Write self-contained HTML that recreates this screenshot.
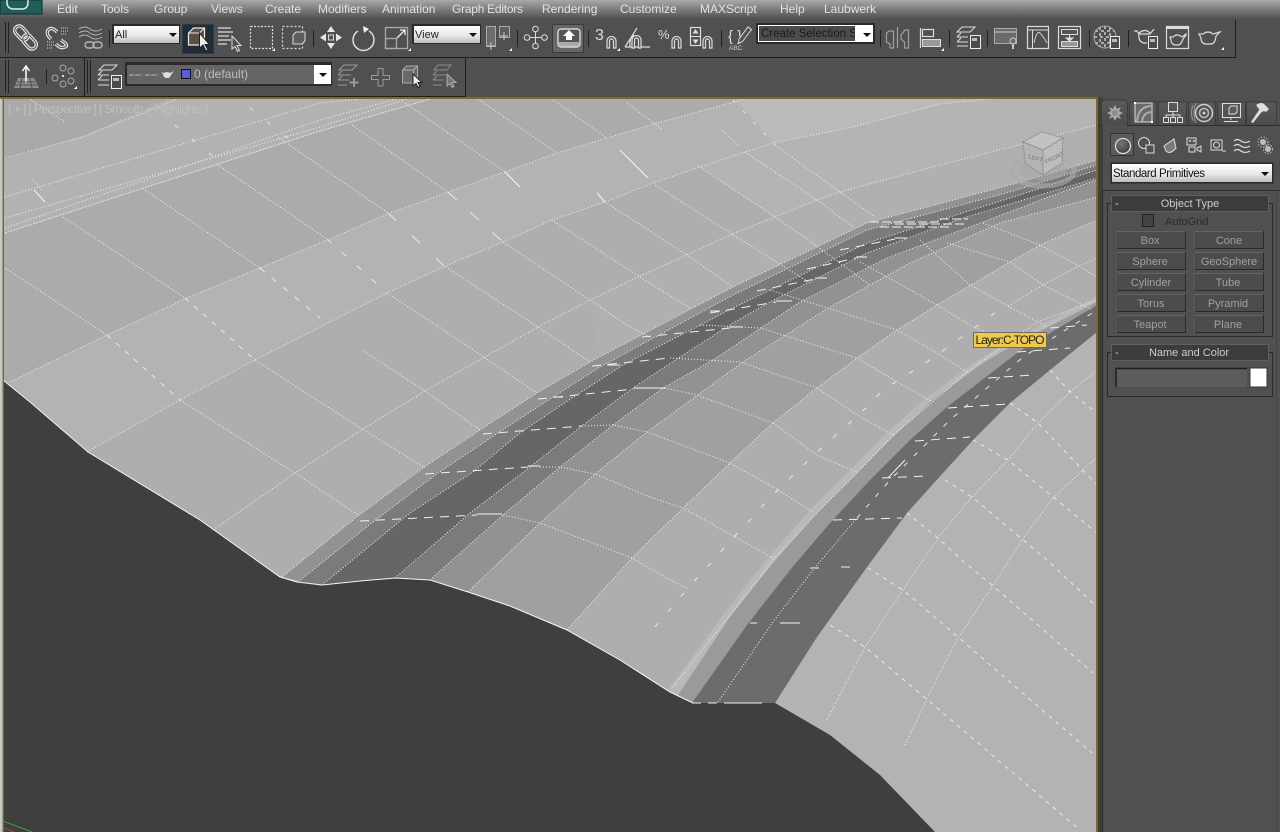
<!DOCTYPE html>
<html lang="en"><head><meta charset="utf-8"><title>3ds Max</title>
<style>
html,body{margin:0;padding:0;background:#505050;width:1280px;height:832px;overflow:hidden}
svg{display:block;font-family:"Liberation Sans",sans-serif}
.d{fill:none;stroke:#f2f2f2;stroke-width:1;stroke-dasharray:1 2}
.s{fill:none;stroke:#eaeaea;stroke-width:1;stroke-dasharray:4 5}
.p{fill:none;stroke:#eaeaea;stroke-width:1;stroke-dasharray:5 15}
.c{fill:none;stroke:#f0f0f0;stroke-width:1;stroke-dasharray:9 7}
.w{fill:none;stroke:#f5f5f5;stroke-width:1}
.i{fill:none;stroke:#dcdcdc;stroke-width:1.200}
.g{fill:none;stroke:#a0a0a0;stroke-width:1.200}
.m{font-size:12px;fill:#e2e2e2}
.b{font-size:11px;fill:#a0a0a0;text-anchor:middle}
.h{font-size:11px;fill:#cccccc;text-anchor:middle}
</style></head><body>
<svg width="1280" height="832" viewBox="0 0 1280 832" xmlns="http://www.w3.org/2000/svg">
<defs>
<linearGradient id="mb" x1="0" y1="0" x2="0" y2="1"><stop offset="0" stop-color="#a8a8a8"/><stop offset=".5" stop-color="#7c7c7c"/><stop offset="1" stop-color="#505050"/></linearGradient>
<linearGradient id="dd" x1="0" y1="0" x2="0" y2="1"><stop offset="0" stop-color="#fff"/><stop offset=".6" stop-color="#e4e4e4"/><stop offset="1" stop-color="#bdbdbd"/></linearGradient>
<linearGradient id="tab" x1="0" y1="0" x2="0" y2="1"><stop offset="0" stop-color="#5a5a5a"/><stop offset="1" stop-color="#4c4c4c"/></linearGradient>
<radialGradient id="sph" cx=".4" cy=".35" r=".7"><stop offset="0" stop-color="#777"/><stop offset="1" stop-color="#3c3c3c"/></radialGradient>
</defs>

<rect width="1280" height="832" fill="#505050"/>

<!-- VIEWPORT -->
<svg x="0" y="0" width="1097" height="832">
<rect x="3" y="98" width="1094" height="734" fill="#aeaeae"/>
<polygon points="3,98 430,98 320,131 3,233" fill="#b2b2b2"/>
<polygon points="3,98 170,98 85,135 3,160" fill="#a9a9a9"/>
<polygon points="3,233 320,131 430,98 745,98 657,123 607,138 557,153 505,172 448,192 390,213 320,243 260,268 187,298 107,335 10,382 3,382" fill="#ababab"/>
<polygon points="187,298 260,268 320,243 390,213 448,192 505,172 557,153 607,138 657,123 745,99 773,143 700,167 653,183 605,202 552,220 503,242 443,267 387,293 320,327 255,360 180,400 87,452 10,382 107,335" fill="#b3b3b3"/>
<polygon points="735,98 1000,98 940,104 853,127 773,143" fill="#bababa"/>
<polygon points="773,143 853,127 940,104 1000,98 1097,98 1097,125 940,165 840,192 775,217 700,167" fill="#b4b4b4"/>
<polygon points="590,300 627,282 680,258 732,234 775,217 840,192 940,165 1097,125 1097,160 1010,185 867,223 733,287 600,357" fill="#b0b0b0"/>
<polygon points="567,630 632,558 650,540 730,463 773,423 817,388 857,358 897,330 937,305 1010,262 1040,245 1097,220 1097,832 900,832 775,703 693,703" fill="#aeaeae"/>
<polygon points="775,703 817,637 867,567 907,513 943,473 973,440 1010,403 1050,370 1097,332 1097,832 935,832" fill="#b3b3b3"/>

<!-- road 1 -->
<polygon points="282,577 358,516 423,468 480,430 537,393 590,362 733,287 867,223 1010,185 1097,160 1097,220 1040,245 1010,262 937,305 897,330 857,358 817,388 773,423 730,463 650,540 632,558 567,630 468,592" fill="#a0a0a0"/>
<polygon points="282,577 358,516 423,468 480,430 537,393 590,362 733,287 867,223 1010,185 1097,160 1097,197 1000,223 910,263 830,307 743,362 647,432 595,474 540,523 468,592 430,580 320,585" fill="#929292"/>
<polygon points="298,582 373,522 438,473 498,433 553,397 600,367 733,295 867,230 1010,192 1097,165 1097,180 1067,190 983,222 887,258 800,302 713,360 663,388 613,425 560,467 503,515 430,580 395,578 322,585" fill="#7b7b7b"/>
<polygon points="322,585 410,513 473,472 520,433 572,398 623,365 733,308 867,243 1010,198 1097,170 1097,178 1033,197 960,219 867,253 770,302 733,323 680,357 633,388 583,425 530,467 470,513 395,578" fill="#666666"/>

<!-- road 2 -->
<polygon points="668,690 725,612 768,558 812,508 852,468 888,432 928,396 978,360 1012,340 1097,296 1097,302 1017,343 983,363 933,400 893,437 857,473 817,513 773,563 730,617 678,695" fill="#b9b9b9"/>
<polygon points="678,695 730,617 773,563 817,513 857,473 893,437 933,400 983,363 1017,343 1097,302 1097,308 1017,353 947,407 910,440 870,480 830,523 790,570 747,625 692,703" fill="#9a9a9a"/>
<polygon points="692,703 747,625 790,570 830,523 870,480 910,440 947,407 1017,353 1097,305 1097,332 1050,370 1010,403 973,440 943,473 907,513 867,567 817,637 775,703" fill="#6c6c6c"/>

<!-- dark ground -->
<polygon points="3,380 30,402 88,452 200,520 280,577 297,582 322,585 360,581 395,578 430,580 468,592 510,606 567,630 620,660 670,692 693,703 775,703 830,735 880,775 935,832 3,832" fill="#3f3f3f"/>
<polyline class="w" points="3,380 30,402 88,452 200,520 280,577 297,582 322,585 360,581 395,578 430,580 468,592 510,606 567,630 620,660 670,692 693,703"/>

<!-- grid: up-right family -->
<polyline class="d" points="5,197 320,103 370,98"/>
<polyline class="d" points="5,218 320,127 410,98"/>
<polyline points="5,233 320,131 430,99" style="fill:none;stroke:#e4e4e4;stroke-dasharray:2 1"/>
<polyline class="d" points="5,228 320,120 400,98"/>
<polyline class="d" points="5,158 83,137 180,98"/>
<polyline class="d" points="10,382 107,335 187,298 260,268 320,243 390,213 448,192 505,172 557,153 607,138 657,123 745,99"/>
<polyline class="d" points="87,452 180,400 255,360 320,327 387,293 443,267 503,242 552,220 605,202 653,183 700,167 745,152 773,143 853,127 940,104 1000,98"/>
<polyline class="d" points="213,530 295,473 363,429 425,391 483,358 538,327 590,300 627,282 680,258 732,234 775,217 817,200 840,192 940,165 1097,125"/>
<!-- grid: down-right family -->
<polyline class="d" points="5,268 107,335"/><polyline class="s" style="stroke-dasharray:5 7" points="107,335 180,400"/><polyline class="d" points="180,400 295,473 358,515"/>
<polyline class="d" points="63,217 185,298"/><polyline class="s" style="stroke-dasharray:5 7" points="185,298 255,360"/><polyline class="d" points="255,360 362,429 425,468"/>
<polyline class="d" points="145,190 260,268"/><polyline class="s" style="stroke-dasharray:6 9" points="260,268 320,318"/><polyline class="d" points="362,350 425,391 480,430"/>
<polyline class="d" points="218,165 327,239"/><polyline class="s" style="stroke-dasharray:6 14" points="327,239 387,293"/><polyline class="d" points="387,293 448,333 537,393"/>
<polyline class="d" points="278,137 388,213"/><polyline class="s" style="stroke-dasharray:11 22" points="388,213 443,265"/><polyline class="d" points="443,265 538,327 590,362"/>
<polyline class="d" points="352,125 448,192"/><polyline class="s" style="stroke-dasharray:12 18" points="448,192 503,242"/><polyline class="d" points="503,242 627,325 650,337"/>
<polyline class="d" points="405,103 505,172"/><polyline class="w" points="505,172 520,187"/><polyline class="d" points="552,220 640,277 690,308"/>
<polyline class="d" points="478,99 557,153"/><polyline class="w" points="597,193 605,202"/><polyline class="d" points="605,202 687,255 733,287"/>
<polyline class="d" points="553,100 607,138"/><polyline class="w" points="620,150 648,178"/><polyline class="d" points="655,185 732,234 810,283"/>
<polyline class="d" points="627,103 663,130"/><polyline class="d" points="698,166 775,217 800,234 870,285"/>
<polyline class="d" points="722,130 738,145"/><polyline class="d" points="745,152 817,200 853,227"/>
<polyline class="s" style="stroke-dasharray:3 12" points="733,100 775,145"/><polyline class="d" points="775,145 840,192 875,217"/>
<polyline class="d" points="28,98 65,122"/>
<polyline class="d" points="33,180 42,190"/><polyline class="w" points="34,190 45,202"/>
<polyline class="s" style="stroke-dasharray:4 18" points="175,125 215,158"/>
<polyline class="s" style="stroke-dasharray:4 18" points="250,108 290,140"/>
<!-- road 1 edges -->
<polyline class="d" points="282,577 358,516 423,468 480,430 537,393 590,362 733,287 867,223 1010,185 1097,160"/>
<polyline class="d" points="298,582 373,522 438,473 498,433 553,397 600,367 733,295 867,230 1010,192 1097,165"/>
<polyline class="d" points="322,585 410,513 473,472 520,433 572,398 623,365 733,308 867,243 1010,198 1097,170"/>
<polyline class="d" points="395,578 470,513 530,467 583,425 633,388 680,357 733,323 770,302 867,253 960,219 1033,197 1097,178"/>
<polyline class="d" points="430,580 503,515 560,467 613,425 663,388 713,360 800,302 887,258 983,222 1067,190 1097,180"/>
<polyline class="d" points="468,592 540,523 595,474 647,432 743,362 830,307 910,263 1000,223 1097,197"/>
<polyline class="d" points="567,630 632,558 650,540 730,463 773,423 817,388 857,358 897,330 937,305 1010,262 1040,245 1097,220"/>
<!-- road 1 crossings -->
<polyline class="c" points="360,521 477,515"/><path class="w" d="M477 514H502"/>
<polyline class="c" points="425,474 528,467"/><path class="w" d="M528 466H540"/>
<polyline class="c" points="483,434 582,426"/>
<polyline class="c" points="538,399 634,389"/><path class="w" d="M634 388H665M553 397H563"/>
<polyline class="c" points="592,366 670,358"/><path class="w" d="M607 365H620"/>
<polyline class="c" points="642,337 730,328"/><path class="w" d="M730 327H743"/>
<polyline class="c" points="710,313 776,302"/><path class="w" d="M710 311H720M776 301H792"/>
<polyline class="c" points="757,291 815,279"/><path class="w" d="M815 278H827"/>
<polyline class="c" points="807,269 856,258"/><path class="w" d="M856 257H867"/>
<polyline class="c" points="840,250 895,239"/><path class="w" d="M895 238H907"/>
<path d="M880 227H950M895 224H965M870 222H940M940 219H968" style="fill:none;stroke:#f0f0f0;stroke-dasharray:9 3"/>
<!-- continuation of crossings -->
<polyline class="d" points="503,515 540,523 632,558 670,580 687,588"/>
<polyline class="d" points="540,467 560,467 595,474 650,497 683,508 773,558"/>
<polyline class="d" points="582,426 613,425 647,432 730,463 778,490 813,512"/>
<polyline class="d" points="665,388 697,395 773,423 817,455 857,472"/>
<polyline class="d" points="670,358 740,362 817,388 857,415 893,435"/>
<polyline class="d" points="700,325 760,328 857,358 897,382 933,402"/>
<polyline class="d" points="770,290 897,330 937,353 967,372"/>
<polyline class="d" points="860,262 937,305 975,328 1017,343"/>
<polyline class="d" points="920,240 970,285 1008,306 1047,327"/>
<polyline class="d" points="947,243 1010,262 1043,285 1093,310"/>
<polyline class="d" points="983,223 1040,245 1077,265 1097,277"/>
<polyline class="d" points="1008,306 1043,285 1077,267 1097,258"/>
<!-- road 2 lines -->
<polyline class="d" points="673,687 730,615 773,560 817,513 857,473 893,435 933,402 967,372 1037,322 1097,300"/>
<polyline class="p" points="655,627 678,600 697,578 712,562 728,543 743,528 765,503 788,480 817,452 845,427 867,407 883,390 933,358 1003,307"/>
<polyline class="d" points="718,702 773,622 813,570 857,518"/>
<polyline class="s" style="stroke-dasharray:5 9" points="857,518 890,480 915,455 950,420 987,388 1023,357 1097,310"/>
<path class="c" d="M692 703H733"/><path class="w" d="M733 703H762"/>
<path class="c" style="stroke-dasharray:7 30" d="M750 623H780"/><path class="w" d="M780 623H800"/>
<path class="c" d="M810 568H825M841 567H853"/>
<polyline class="c" points="833,520 902,518"/>
<polyline class="c" points="882,478 927,476"/><path class="w" d="M888 478L905 460"/>
<polyline class="c" points="915,441 970,437"/>
<polyline class="c" points="948,408 1008,404"/>
<polyline class="c" points="988,378 1033,375"/>
<polyline class="c" points="1017,352 1070,348"/>
<polyline class="c" points="1050,328 1087,325"/>
<!-- right side dashed -->
<polyline class="s" points="907,513 938,538 965,563 992,585 1093,673"/>
<polyline class="s" points="868,568 903,590 930,613 958,637 1092,753"/>
<polyline class="s" points="830,625 865,647 930,702 1080,830"/>
<polyline class="s" points="945,480 972,497 1047,560 1095,605"/>
<polyline class="s" points="973,440 1008,460 1097,533"/>
<polyline class="s" points="1010,403 1038,423 1097,485"/>
<polyline class="s" points="1050,370 1070,392 1097,413"/>
<polyline class="d" points="827,720 865,647 903,590 938,538 972,497 1008,460 1038,423 1070,392 1097,370"/>
<polyline class="d" points="905,745 917,720 930,692 958,638 992,587 1022,540 1053,498 1097,457"/>

<!-- nav cube -->
<ellipse cx="1043" cy="171" rx="31" ry="15" fill="none" stroke="#a8acb0" stroke-width="5" opacity=".6"/>
<ellipse cx="1043" cy="170" rx="24" ry="10" fill="#a6a6a6" opacity=".5"/>
<polygon points="1023,142 1042,132 1063,138 1043,150" fill="#c2c2c2" stroke="#8a8a8a" stroke-dasharray="2 1"/>
<polygon points="1023,142 1043,150 1043,175 1025,163" fill="#b4b4b4" stroke="#8a8a8a" stroke-dasharray="2 1"/>
<polygon points="1043,150 1063,138 1062,163 1043,175" fill="#bdbdbd" stroke="#8a8a8a" stroke-dasharray="2 1"/>
<text x="1028" y="158" font-size="6" fill="#777" transform="rotate(18 1028 158)">LEFT</text>
<text x="1046" y="164" font-size="6" fill="#777" transform="rotate(-26 1046 164)">FRONT</text>

<path d="M0 820L32 832" stroke="#3aa04a" fill="none"/><path d="M0 826L14 832" stroke="#a04a3a" fill="none"/>

<text x="8" y="113" font-size="12" fill="#bfbfbf" textLength="200">[ + ] [ Perspective ] [ Smooth + Highlights ]</text>
</svg>
<!-- viewport frame -->
<rect x="0" y="97" width="1097" height="2" fill="#7a6a2e"/>
<rect x="2.500" y="97" width="1.500" height="735" fill="#7a6a2e"/>
<rect x="1096" y="97" width="2" height="735" fill="#7a6a2e"/>
<rect x="1098" y="97" width="5" height="735" fill="#3e3e3e"/>
<rect x="0" y="99" width="2.500" height="733" fill="#c8c8c8"/>

<!-- tooltip -->
<rect x="973.500" y="332.500" width="73" height="15" fill="#edc94c" stroke="#6c6c6c"/>
<text x="975.500" y="344" font-size="12" fill="#222" textLength="69">Layer:C-TOPO</text>

<!-- MENU -->
<rect width="1280" height="19" fill="url(#mb)"/>
<rect x="0" y="0" width="42" height="14" fill="#1f5f5a" stroke="#0f2f2e"/>
<path d="M7 0V2Q7 9 14 9H22Q28 9 28 2V0" fill="none" stroke="#e6e6e6" stroke-width="1.500"/>
<text class="m" x="57" y="13">Edit</text>
<text class="m" x="101" y="13">Tools</text>
<text class="m" x="154" y="13">Group</text>
<text class="m" x="211" y="13">Views</text>
<text class="m" x="265" y="13">Create</text>
<text class="m" x="318" y="13">Modifiers</text>
<text class="m" x="382" y="13">Animation</text>
<text class="m" x="452" y="13" textLength="71">Graph Editors</text>
<text class="m" x="542" y="13">Rendering</text>
<text class="m" x="620" y="13">Customize</text>
<text class="m" x="700" y="13">MAXScript</text>
<text class="m" x="780" y="13">Help</text>
<text class="m" x="824" y="13">Laubwerk</text>

<!-- toolbars frame -->
<path d="M0 57.500H1235.500V19.500" fill="none" stroke="#1e1e1e"/>
<path d="M0 96.500H465.500V58" fill="none" stroke="#1e1e1e"/>
<path d="M84.500 58V96" stroke="#1e1e1e" fill="none"/>
<!-- grips -->
<path d="M5.500 22V53M8.500 22V53M5.500 60V93M8.500 60V93M87.500 60V93M90.500 60V93" stroke="#222" fill="none"/>
<path d="M109.500 30V47M313.500 30V47M517.500 30V47M588.500 30V47M721.500 30V47M880.500 30V47M949.500 30V47M987.500 30V47M1089.500 30V47M1128.500 30V47M46.500 69V84" stroke="#222" fill="none"/>

<!-- link -->
<g transform="translate(25.500,37.500) rotate(48)" fill="none"><rect x="-14" y="-4.500" width="16" height="9" rx="4.500" stroke="#e4e4e4" stroke-width="3.400"/><rect x="-2" y="-4.500" width="16" height="9" rx="4.500" stroke="#e4e4e4" stroke-width="3.400"/><rect x="-14" y="-4.500" width="16" height="9" rx="4.500" stroke="#505050"/><rect x="-2" y="-4.500" width="16" height="9" rx="4.500" stroke="#505050"/></g>
<!-- unlink -->
<g fill="none"><path d="M57 32L55 30Q51 27 48 30Q46 33 49 37L51 39" stroke="#e4e4e4" stroke-width="3.400"/><path d="M57 32L55 30Q51 27 48 30Q46 33 49 37L51 39" stroke="#505050"/><path d="M61 40L65 43Q68 46 65 47Q61 49 57 45L56 44" stroke="#e4e4e4" stroke-width="3.400"/><path d="M61 40L65 43Q68 46 65 47Q61 49 57 45L56 44" stroke="#505050"/><path d="M61 28h7M61 31h7M61 34h6M47 42h7M47 45h7M47 48h6" stroke="#d8d8d8" stroke-dasharray="1 1"/></g>
<!-- bind -->
<g fill="none" stroke="#b4b4b4"><path d="M79 29q6-4 11 0t12 0M79 33q6-4 11 0t12 0M79 37q6-4 11 0t12 0"/><rect x="85" y="42" width="9" height="6" rx="3" stroke-width="1.400"/><rect x="93" y="42" width="9" height="6" rx="3" stroke-width="1.400"/></g>
<!-- All dropdown -->
<rect x="112" y="24" width="68" height="20" fill="#2a2a2a"/>
<rect x="114" y="26" width="65" height="17" fill="url(#dd)"/>
<text x="115" y="38" font-size="11" fill="#123">All</text>
<path d="M169 33h8l-4 4z" fill="#111"/>
<!-- select object active -->
<rect x="182.500" y="24.500" width="31" height="29" fill="#1f2d38" stroke="#3b3b3b"/>
<path d="M188.500 33l5-5h11v12l-5 5h-11z" fill="#5a5046" stroke="#e8e8e8" stroke-width="1.200"/><path d="M188.500 33h11v12M199.500 33l5-5" fill="none" stroke="#e8e8e8"/>
<path d="M199.500 33v15l3.500-3 3 6 2-1-3-5.500h4.500z" fill="#eee" stroke="#222"/>
<!-- select by name -->
<path class="i" d="M218 28h13M218 32h15M218 36h11M218 40h13M218 44h9"/><path d="M232 36v13l3-2.500 2.500 5 2-1-2.500-5h4z" fill="#505050" stroke="#ddd"/>
<!-- rect region -->
<rect x="250.500" y="26.500" width="22" height="22" class="i" style="stroke-dasharray:2 1.500"/><path d="M272 51l3-3v3z" fill="#fff"/>
<!-- window crossing -->
<rect x="282.500" y="26.500" width="20" height="22" class="i" style="stroke-dasharray:2 2"/><path d="M293 35l3-3h9v9l-3 3h-9z" fill="#5e5e5e" stroke="#ddd"/>
<!-- move -->
<g fill="#e8e8e8"><path d="M331 26l4 6h-8zM331 49l4-6h-8zM320 37.500l6-4v8zM342 37.500l-6-4v8z"/></g><rect x="328.500" y="35" width="5" height="5" fill="none" stroke="#ddd"/>
<!-- rotate -->
<path d="M358 31A10.500 10.500 0 1 0 369 31" fill="none" stroke="#ddd" stroke-width="1.500"/><path d="M363 26l6 3-5 4z" fill="#eee"/>
<!-- scale -->
<rect x="385.500" y="38.500" width="11" height="10" fill="none" stroke="#aaa" stroke-width="1.300"/><rect x="385.500" y="27.500" width="22" height="21" fill="none" stroke="#aaa" stroke-width="1.300"/><path d="M397 38L405 30M400 30h5v5" fill="none" stroke="#eee" stroke-width="1.300"/>
<path d="M408 51l3-3v3z" fill="#fff"/>
<!-- View dropdown -->
<rect x="412" y="24" width="69" height="20" fill="#2a2a2a"/>
<rect x="414" y="26" width="66" height="17" fill="url(#dd)"/>
<text x="415" y="38" font-size="11" fill="#222">View</text>
<path d="M469 33h8l-4 4z" fill="#111"/>
<!-- pivot -->
<rect x="486.500" y="26.500" width="9" height="20" fill="#6c6c6c" stroke="#aaa"/><rect x="499.500" y="26.500" width="10" height="11" fill="#5c5c5c" stroke="#aaa"/><path d="M487 46h8M491 42v8M500 36h8M504 32v8" stroke="#ccc" fill="none"/><path d="M509 51l3-3v3z" fill="#fff"/>
<!-- manipulate -->
<g fill="none" stroke="#ddd"><circle cx="535.500" cy="29" r="2.800"/><circle cx="535.500" cy="46" r="2.800"/><circle cx="527" cy="37.500" r="2.800"/><circle cx="544.500" cy="37.500" r="2.800"/><path d="M530 37.500h12M535.500 32v11"/></g>
<!-- keyboard override -->
<rect x="552.500" y="24.500" width="31" height="28" fill="#666" stroke="#3a3a3a"/><rect x="558" y="29" width="22" height="18" rx="3" fill="#555" stroke="#eee" stroke-width="1.200"/><rect x="559" y="42" width="20" height="4.500" fill="#aaa"/><path d="M569 30l6 6h-3v4h-6v-4h-3z" fill="#fff"/>
<!-- snaps -->
<text x="595" y="40" font-size="16" fill="#ddd">3</text>
<path class="i" d="M607 48V41a4.500 4.500 0 0 1 9 0V48h-2.500V41a2 2 0 0 0-4 0V48z"/><path d="M617 51l3-3v3z" fill="#fff"/>
<path class="i" d="M625 47L637 28M625 47H650 M630 47Q629 38 634 35"/><path class="i" d="M632 48V40a4.500 4.500 0 0 1 9 0V48h-2.500V40a2 2 0 0 0-4 0V48z" style="fill:#505050"/>
<text x="658" y="39" font-size="13" fill="#ddd">%</text>
<path class="i" d="M672 48V41a4.500 4.500 0 0 1 9 0V48h-2.500V41a2 2 0 0 0-4 0V48z"/>
<rect x="690.500" y="27.500" width="10" height="18" class="i"/><path d="M690 36.500h11" stroke="#ddd" fill="none"/><path d="M695.500 29l3 4.500h-6zM695.500 44l3-4.500h-6z" fill="#ddd"/><path class="i" d="M703 48V41a4.500 4.500 0 0 1 9 0V48h-2.500V41a2 2 0 0 0-4 0V48z"/>
<!-- edit named sets -->
<text x="728" y="41" font-size="15" fill="#ddd">{ }</text><path d="M739 39l9-12 3.500 2.500-9 12-4 2z" fill="#505050" stroke="#ddd"/><text x="729" y="50" font-size="6.500" fill="#ccc">ABC</text>
<!-- create selection -->
<rect x="756" y="23" width="119" height="21" fill="#2a2a2a"/>
<rect x="758" y="25" width="115" height="17" fill="#fff"/>
<rect x="759" y="26" width="96" height="15" fill="#4c4c4c"/>
<svg x="759" y="26" width="96" height="15"><text x="2" y="11" font-size="11.500" fill="#1c1c1c">Create Selection Set</text></svg>
<path d="M863 33h8l-4 4z" fill="#111"/>
<!-- mirror -->
<path class="g" d="M897.500 27V48M886.500 33l3-2h4v17h-3.500v-4l-3.500-2zM901 35l4-5h3.500v18h-4v-6l-3.500-3z"/>
<!-- align -->
<path class="i" d="M920.500 28V48"/><rect x="922.500" y="29.500" width="11" height="7" class="i"/><rect x="922.500" y="39.500" width="18" height="7" fill="#9a9a9a" stroke="#ddd"/><path d="M941 51l3-3v3z" fill="#fff"/>
<!-- layers -->
<g fill="none" stroke="#ddd"><path d="M957 32h13l5-5h-13zM957 37h11M957 37l4-4M957 42h11M957 42l4-4M957 46h11"/></g><rect x="970.500" y="35.500" width="10" height="13" fill="#4c4c4c" stroke="#eee"/><rect x="972" y="38" width="5" height="3" fill="#bbb"/>
<!-- curve / schematic / material -->
<rect x="994.500" y="28.500" width="22" height="15" fill="#6a6a6a" stroke="#aaa"/><path d="M995 32h21" stroke="#ccc" fill="none"/><circle cx="1013" cy="41" r="3" fill="#6a6a6a" stroke="#ccc"/><path d="M1013 44v5" stroke="#ccc" stroke-width="2" fill="none"/>
<rect x="1027.500" y="26.500" width="21" height="22" class="i"/><path d="M1027 30h22M1032.500 30v18" stroke="#ddd" fill="none"/><path d="M1034 43q3-13 6-10t7 10" fill="none" stroke="#ccc"/>
<rect x="1058.500" y="26.500" width="22" height="22" class="i"/><rect x="1061.500" y="29.500" width="16" height="5" fill="#555" stroke="#ddd"/><rect x="1061.500" y="41.500" width="16" height="5" fill="#999" stroke="#ddd"/><path d="M1069.500 35v3M1066 38h7l-3.500 3z" fill="#ddd" stroke="#ddd"/>
<!-- material sphere -->
<circle cx="1105" cy="37" r="11" fill="#4e4e4e" stroke="#aaa"/><path d="M1095 31h20M1094 37h22M1095 43h20M1100 27v20M1105 26v22M1110 27v20" stroke="#aaa" stroke-dasharray="3 3" stroke-width="2" fill="none"/><rect x="1110.500" y="36.500" width="9" height="12" fill="#4c4c4c" stroke="#eee"/><rect x="1112" y="39" width="5" height="3" fill="#bbb"/>
<!-- render setup -->
<path class="i" d="M1134 31h3l2 3h11l4-5M1139 33q6-5 11 0M1139 34q-1 8 5 9h3"/><rect x="1148.500" y="36.500" width="9" height="12" fill="#4c4c4c" stroke="#eee"/><rect x="1150" y="39" width="5" height="3" fill="#bbb"/>
<rect x="1166.500" y="26.500" width="22" height="22" class="i"/><rect x="1166" y="26" width="23" height="3" fill="#ddd"/><path class="i" d="M1170 37h3q4-4 9 0l4-3v1l-3 4q-2 6-5 6h-3q-4-1-4-5z"/>
<path class="i" d="M1199 34h4q5-4 10 0l7-2-4 4q-1 8-5 8h-6q-4-1-4-6z"/><path d="M1221 50l3-3v3z" fill="#fff"/>

<!-- TOOLBAR 2 -->
<path d="M18 78h16l5 10H14z" fill="#8c8c8c"/><path d="M26 83V67M22.500 71l3.500-5 3.500 5" stroke="#fff" fill="none" stroke-width="1.500"/><path d="M17 82h18M15 85h22M22 78l-2 10M30 78l2 10" stroke="#505050" fill="none"/>
<g fill="none" stroke="#aaa"><circle cx="63" cy="68" r="3"/><circle cx="71" cy="71" r="3"/><circle cx="71" cy="81" r="3"/><circle cx="63" cy="84" r="3"/><circle cx="55" cy="78" r="3"/><circle cx="56" cy="71" r="0"/></g><circle cx="63" cy="76" r="1" fill="#fff"/><path d="M74 89l3-3v3z" fill="#fff"/>
<g fill="none" stroke="#ddd"><path d="M99 70h13l5-5h-13zM98 75h11M98 75l4-4M98 80h11M98 80l4-4M98 85h11"/></g><rect x="111.500" y="75.500" width="10" height="13" fill="#4c4c4c" stroke="#eee"/><rect x="113" y="78" width="6" height="3" fill="#bbb"/>
<!-- layer dropdown -->
<rect x="125" y="62" width="207" height="24" fill="#2a2a2a"/>
<rect x="127" y="65" width="187" height="19" fill="#656565"/>
<rect x="314" y="65" width="17" height="19" fill="#fff"/>
<path d="M319 73h8l-4 4z" fill="#111"/>
<path d="M129 75h13M145 75h13" stroke="#8e8e8e" stroke-width="2" stroke-dasharray="5 1" fill="none"/>
<path d="M161 72l3 1q3-2 6 0l4-2-3 4q-1 3-3 3h-2q-3-1-3-4z" fill="#ddd"/>
<rect x="181.500" y="69.500" width="9" height="9" fill="#5a5ce0" stroke="#111"/>
<text x="194" y="78" font-size="12" fill="#bdbdbd">0 (default)</text>
<!-- layer tools -->
<g fill="none" stroke="#999"><path d="M339 70h13l5-5h-13zM338 75h13M338 75l4-4M338 80h11M338 80l4-4M338 85h9"/></g><path d="M354 78v9M349.500 82.500h9" stroke="#999" stroke-width="2" fill="none"/>
<path d="M378 68.500h5v7h6.500v4H383V86h-5v-6.500h-6.500v-4h6.500z" fill="none" stroke="#9a9a9a"/>
<path d="M402.500 70l4-4h11v13l-4 4h-11z" fill="#6a6a6a" stroke="#aaa"/><path d="M402.500 70h11v13M413.500 70l4-4" fill="none" stroke="#aaa"/><path d="M413 74v12l3-2.500 2 4 2-1-2-4h4z" fill="#eee" stroke="#222"/>
<g fill="none" stroke="#8c8c8c"><path d="M434 70h13l4-5h-13zM433 75h13M433 75l4-4M433 80h11M433 80l4-4M433 85h9"/></g><path d="M447 74v12l3-2.500 2 4 2-1-2-4h4z" fill="#777" stroke="#aaa"/>

<!-- COMMAND PANEL tabs -->
<g fill="url(#tab)" stroke="#3c3c3c"><path d="M1101.500 125V104q0-4 4-4h18q4 0 4 4V125"/><path d="M1129.500 125V104q0-2 3-2h24v23"/><path d="M1158.500 125V102h28v23"/><path d="M1188.500 125V102h27v23"/><path d="M1217.500 125V102h28v23"/><path d="M1246.500 125V102h30v23"/></g>
<path d="M1098 125.500H1102M1127 125.500H1280" stroke="#2e2e2e" fill="none"/>
<!-- create -->
<path d="M1115 105l2 4 4-2-2 4 4 2-4 2 2 4-4-2-2 4-2-4-4 2 2-4-4-2 4-2-2-4 4 2z" fill="#a8a8a8"/><circle cx="1115" cy="113" r="3" fill="#8c8c8c"/>
<!-- modify -->
<rect x="1135" y="103" width="17" height="19" fill="#6a6a6a" stroke="#ddd"/><path d="M1137 122q1-16 15-16M1142 122q1-10 10-10" fill="none" stroke="#aaa" stroke-width="2"/><rect x="1134" y="102" width="2" height="2" fill="#fff"/><rect x="1151" y="121" width="2" height="2" fill="#fff"/>
<!-- hierarchy -->
<g fill="none" stroke="#ddd"><rect x="1168.500" y="102.500" width="9" height="9"/><rect x="1163.500" y="117.500" width="5" height="5"/><rect x="1170.500" y="117.500" width="5" height="5"/><rect x="1177.500" y="117.500" width="5" height="5"/><path d="M1173 112v5M1166 117v-2h14v2"/></g>
<!-- motion -->
<g fill="none"><circle cx="1204" cy="113" r="8.500" stroke="#ccc" stroke-width="1.500"/><circle cx="1204" cy="113" r="4.500" stroke="#bbb" stroke-width="1.500"/><circle cx="1204" cy="113" r="1.500" fill="#ccc"/><path d="M1193 105q-3 8 0 16M1196 103q-4 10 0 20" stroke="#999"/></g>
<!-- display -->
<rect x="1222.500" y="103.500" width="18" height="14" fill="none" stroke="#ddd"/><path d="M1229 108l2-2h6v6l-2 2h-6z" fill="#5a5a5a" stroke="#ddd"/><path d="M1231 117v3M1224 121.500h14" stroke="#ddd" fill="none"/>
<!-- hammer -->
<path d="M1251 122l2 1 11-14-3-2z" fill="#ddd"/><path d="M1256 105q6-4 9 0l4 4-3 3-2-1-2 1-4-4q-1-2-2-3z" fill="#ddd"/>

<!-- sub icons -->
<rect x="1110.500" y="133.500" width="23" height="22" fill="#5c5c5c" stroke="#333"/>
<circle cx="1123" cy="146" r="7.500" fill="url(#sph)" stroke="#ddd" stroke-width="1.300"/>
<circle cx="1144" cy="143" r="5.500" fill="none" stroke="#ddd"/><rect x="1146" y="145" width="8" height="8" fill="#505050" stroke="#ddd"/>
<path d="M1164 146l10-7 2 9q-6 7-10 3z" fill="#7a7a7a" stroke="#ddd"/>
<path d="M1187 138h9v7h-9zM1189 147h6v5h-6zM1197 148l4-2v6l-4-2z" fill="#555" stroke="#ddd"/><circle cx="1190" cy="141" r="1" fill="#ddd"/><circle cx="1194" cy="141" r="1" fill="#ddd"/>
<path d="M1211 140h11v10h-11z" fill="none" stroke="#ddd"/><circle cx="1216.500" cy="145" r="3" fill="none" stroke="#ddd"/><path d="M1222 151h4" stroke="#ddd" fill="none"/>
<path d="M1234 141q3-3 7 0t9 0M1234 146q3-3 7 0t9 0M1234 151q3-3 7 0t9 0" fill="none" stroke="#ddd" stroke-width="1.200"/>
<g fill="#bdbdbd"><circle cx="1263" cy="142" r="3"/><circle cx="1268" cy="149" r="3"/></g><g fill="none" stroke="#bdbdbd" stroke-dasharray="1.500 1.500"><circle cx="1263" cy="142" r="5"/><circle cx="1268" cy="149" r="4.500"/></g>

<!-- primitives dropdown -->
<rect x="1110.500" y="162.500" width="163" height="21" fill="#2a2a2a"/>
<rect x="1112" y="164" width="160" height="18" fill="url(#dd)"/>
<text x="1113" y="177" font-size="11.500" fill="#111" textLength="92">Standard Primitives</text>
<path d="M1261 172h8l-4 4z" fill="#111"/>

<!-- rollout container -->
<path d="M1102.500 832V190.500H1280" fill="none" stroke="#2c2c2c"/>
<path d="M1276.500 190V832" stroke="#444" fill="none"/>
<rect x="1107.500" y="203.500" width="165" height="133" fill="none" stroke="#2a2a2a"/>
<rect x="1107.500" y="352.500" width="165" height="44" fill="none" stroke="#2a2a2a"/>
<rect x="1111.500" y="195.500" width="157" height="16" fill="#3c3c3c" stroke="#5e5e5e"/>
<rect x="1111.500" y="344.500" width="157" height="16" fill="#3c3c3c" stroke="#5e5e5e"/>
<text x="1115" y="207" font-size="11" fill="#d0d0d0">-</text>
<text x="1115" y="356" font-size="11" fill="#d0d0d0">-</text>
<text class="h" x="1190" y="207">Object Type</text>
<text class="h" x="1189" y="356">Name and Color</text>
<rect x="1142.500" y="214.500" width="11" height="12" fill="#444" stroke="#222"/>
<text x="1165" y="225" font-size="11" fill="#2a2a2a">AutoGrid</text>

<g fill="#4c4c4c" stroke="#2a2a2a">
<rect x="1117.500" y="231.500" width="68" height="17"/><rect x="1195.500" y="231.500" width="68" height="17"/>
<rect x="1117.500" y="252.500" width="68" height="17"/><rect x="1195.500" y="252.500" width="68" height="17"/>
<rect x="1117.500" y="273.500" width="68" height="17"/><rect x="1195.500" y="273.500" width="68" height="17"/>
<rect x="1117.500" y="294.500" width="68" height="17"/><rect x="1195.500" y="294.500" width="68" height="17"/>
<rect x="1117.500" y="315.500" width="68" height="17"/><rect x="1195.500" y="315.500" width="68" height="17"/>
</g>
<path d="M1117 231.500h68M1117 231.500v17M1195 231.500h68M1195 231.500v17M1117 252.500h68M1117 252.500v17M1195 252.500h68M1195 252.500v17M1117 273.500h68M1117 273.500v17M1195 273.500h68M1195 273.500v17M1117 294.500h68M1117 294.500v17M1195 294.500h68M1195 294.500v17M1117 315.500h68M1117 315.500v17M1195 315.500h68M1195 315.500v17" stroke="#636363" fill="none"/>
<text class="b" x="1150" y="244">Box</text><text class="b" x="1229" y="244">Cone</text>
<text class="b" x="1150" y="265">Sphere</text><text class="b" x="1229" y="265">GeoSphere</text>
<text class="b" x="1151" y="286">Cylinder</text><text class="b" x="1228" y="286">Tube</text>
<text class="b" x="1151" y="307">Torus</text><text class="b" x="1228" y="307">Pyramid</text>
<text class="b" x="1150" y="328">Teapot</text><text class="b" x="1228" y="328">Plane</text>

<rect x="1116" y="368" width="131" height="19" fill="#5c5c5c"/>
<path d="M1116 387V368.500H1247" fill="none" stroke="#1c1c1c" stroke-width="1.500"/>
<rect x="1250" y="368" width="17" height="19" fill="#fff" stroke="#333"/>
</svg>
</body></html>
